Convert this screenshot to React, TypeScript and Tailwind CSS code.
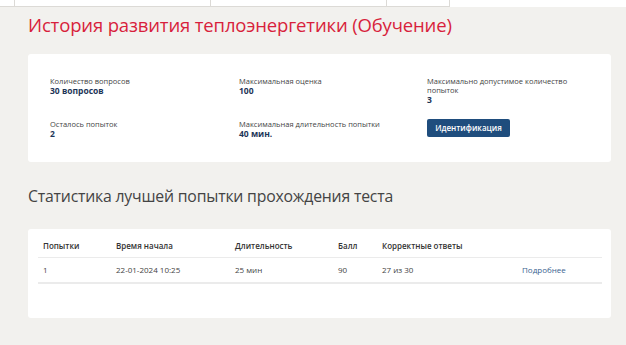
const stats = [
  { label: "Количество вопросов", value: "30 вопросов" },
  { label: "Максимальная оценка", value: "100" },
  { label: "Максимально допустимое количество попыток", value: "3", narrow: true },
  { label: "Осталось попыток", value: "2" },
  { label: "Максимальная длительность попытки", value: "40 мин." },
];

const Stat = ({ label, value, narrow }: { label: string; value: string; narrow?: boolean }) => (
  <div>
    <p className={`text-[7.5px] leading-[9px] text-[#444] ${narrow ? "w-[150px]" : ""}`}>{label}</p>
    <p className="text-[8.5px] leading-[10px] font-bold text-[#1d3557]">{value}</p>
  </div>
);

export default function App() {
  return (
    <div className="w-[626px] h-[345px] bg-[#f2f1ee] font-['Open_Sans',sans-serif] overflow-hidden">
      <div className="flex bg-white h-[7px]">
        <div className="flex border-b border-[#dcdad6]">
          <div className="w-[15px] border-r border-[#dcdad6]" />
          <div className="w-[196px] border-r border-[#dcdad6]" />
          <div className="w-[176px] border-r border-[#dcdad6]" />
          <div className="w-[63px] border-r border-[#dcdad6]" />
        </div>
      </div>

      <div className="px-[28px] pr-[15px]">
        <h1 className="mt-[5px] text-[18.5px] leading-[26px] font-medium text-[#d81f3c] tracking-[-0.15px]">
          История развития теплоэнергетики (Обучение)
        </h1>

        <div className="mt-[16px] h-[108px] bg-white rounded-[3px] pl-[22px] pt-[23px] grid grid-cols-[189px_188px_1fr] grid-rows-[43px_auto]">
          <Stat {...stats[0]} />
          <Stat {...stats[1]} />
          <Stat {...stats[2]} />
          <Stat {...stats[3]} />
          <Stat {...stats[4]} />
          <div>
            <button className="block -mt-[1px] w-[83px] h-[18px] rounded-[2px] bg-[#1f4d7d] text-white text-[8px] font-semibold">
              Идентификация
            </button>
          </div>
        </div>

        <h2 className="mt-[22px] text-[15.8px] leading-[24px] text-[#444] tracking-[-0.2px]">
          Статистика лучшей попытки прохождения теста
        </h2>

        <div className="mt-[21px] h-[89px] bg-white rounded-[3px] pt-[6px] px-[10px]">
          <table className="w-[564px] text-[8px] text-[#444]">
            <thead>
              <tr className="h-[22px] border-b border-[#ebebeb] text-left">
                <th className="pl-[5px] w-[78px] font-semibold text-[#333]">Попытки</th>
                <th className="w-[119px] font-semibold text-[#333]">Время начала</th>
                <th className="w-[103px] font-semibold text-[#333]">Длительность</th>
                <th className="w-[44px] font-semibold text-[#333]">Балл</th>
                <th className="w-[140px] font-semibold text-[#333]">Корректные ответы</th>
                <th />
              </tr>
            </thead>
            <tbody>
              <tr className="h-[26px] border-b-2 border-[#ebebeb]">
                <td className="pl-[5px]">1</td>
                <td>22-01-2024 10:25</td>
                <td>25 мин</td>
                <td>90</td>
                <td>27 из 30</td>
                <td className="text-[#3a6290]">Подробнее</td>
              </tr>
            </tbody>
          </table>
        </div>
      </div>
    </div>
  );
}
